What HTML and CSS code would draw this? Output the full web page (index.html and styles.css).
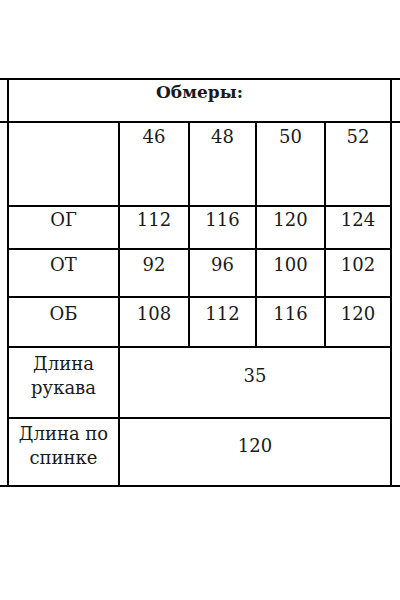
FILE: index.html
```html
<!DOCTYPE html>
<html lang="ru">
<head>
<meta charset="utf-8">
<link rel="stylesheet" href="styles.css">
</head>
<body>
<div class="sheet">
  <div class="cell edge-l-head"></div>
  <div class="cell title">Обмеры:</div>
  <div class="cell edge-r-head"></div>
  <div class="cell edge-l-body"></div>
  <div class="cell edge-r-body"></div>

  <div class="cell top"></div>
  <div class="cell top">46</div>
  <div class="cell top">48</div>
  <div class="cell top">50</div>
  <div class="cell top">52</div>

  <div class="cell">ОГ</div>
  <div class="cell">112</div>
  <div class="cell">116</div>
  <div class="cell">120</div>
  <div class="cell">124</div>

  <div class="cell">ОТ</div>
  <div class="cell">92</div>
  <div class="cell">96</div>
  <div class="cell">100</div>
  <div class="cell">102</div>

  <div class="cell">ОБ</div>
  <div class="cell">108</div>
  <div class="cell">112</div>
  <div class="cell">116</div>
  <div class="cell">120</div>

  <div class="cell sleeve">Длина рукава</div>
  <div class="cell sleeve wide">35</div>

  <div class="cell back">Длина по спинке</div>
  <div class="cell back wide">120</div>
</div>
</body>
</html>
```
FILE: styles.css
```css
html, body {
  margin: 0;
  padding: 0;
  background: #fff;
  overflow: hidden;
}

.sheet {
  display: grid;
  grid-template-columns: 7px 109px 68px 65px 67px 64px 1fr;
  grid-template-rows: 41px 82px 41px 46px 48px 69px 66px;
  gap: 2px;
  padding: 2px 0;
  margin-top: 78px;
  width: 400px;
  background: #000;
  font-family: "DejaVu Serif", serif;
  font-size: 18px;
  line-height: 24px;
  color: #1a1a1a;
}

.cell {
  background: #fff;
  display: flex;
  align-items: center;
  justify-content: center;
  text-align: center;
  padding: 0 2px 16px;
  box-sizing: border-box;
  min-width: 0;
}

.edge-l-head { grid-column: 1; grid-row: 1; padding: 0; }
.edge-r-head { grid-column: 7; grid-row: 1; padding: 0; }
.edge-l-body { grid-column: 1; grid-row: 2 / span 6; padding: 0; }
.edge-r-body { grid-column: 7; grid-row: 2 / span 6; padding: 0; }

.title {
  grid-column: 2 / span 5;
  grid-row: 1;
  font-weight: bold;
  font-size: 17px;
  padding-bottom: 17px;
}

.top {
  align-items: flex-start;
  padding-top: 2px;
  padding-bottom: 0;
}

.wide {
  grid-column: span 4;
}

.sleeve {
  padding-bottom: 14px;
}

.back {
  padding-bottom: 12px;
}
```
